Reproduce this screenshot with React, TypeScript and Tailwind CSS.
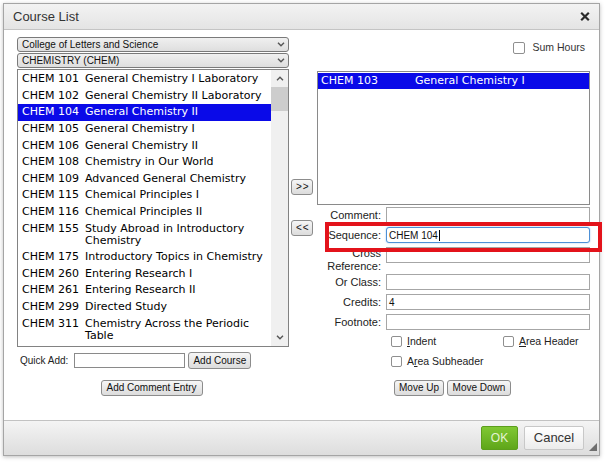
import React from 'react';

const LEFT_COURSES: [string, string][] = [
  ['CHEM 101', 'General Chemistry I Laboratory'],
  ['CHEM 102', 'General Chemistry II Laboratory'],
  ['CHEM 104', 'General Chemistry II'],
  ['CHEM 105', 'General Chemistry I'],
  ['CHEM 106', 'General Chemistry II'],
  ['CHEM 108', 'Chemistry in Our World'],
  ['CHEM 109', 'Advanced General Chemistry'],
  ['CHEM 115', 'Chemical Principles I'],
  ['CHEM 116', 'Chemical Principles II'],
  ['CHEM 155', 'Study Abroad in Introductory Chemistry'],
  ['CHEM 175', 'Introductory Topics in Chemistry'],
  ['CHEM 260', 'Entering Research I'],
  ['CHEM 261', 'Entering Research II'],
  ['CHEM 299', 'Directed Study'],
  ['CHEM 311', 'Chemistry Across the Periodic Table'],
];

const SELECTED_INDEX = 2;

const SANS = "font-['Liberation_Sans',Arial,sans-serif]";
const VERDANA = "font-['DejaVu_Sans',Verdana,sans-serif]";

function Chevron({ up = false, className = '' }: { up?: boolean; className?: string }) {
  return (
    <svg width="8" height="5" viewBox="0 0 8 5" className={className}>
      <path d={up ? 'M1 4.2 L4 1.2 L7 4.2' : 'M1 0.8 L4 3.8 L7 0.8'} fill="none" stroke="#555" strokeWidth="1.4" />
    </svg>
  );
}

function FakeSelect({ value }: { value: string }) {
  return (
    <div className={`h-[15px] flex items-center justify-between rounded-[3px] border border-[#7a7a7a] bg-gradient-to-b from-[#f0f0f0] to-[#dedede] pl-[4px] pr-[3px] text-[10px] text-[#111] ${SANS}`}>
      <span>{value}</span>
      <Chevron />
    </div>
  );
}

function SmallButton({ label, className = '' }: { label: string; className?: string }) {
  return (
    <button className={`h-[16px] px-[4px] rounded-[3px] border border-[#8c8c8c] bg-gradient-to-b from-[#f6f6f6] to-[#dcdcdc] text-[10px] leading-none text-[#111] ${SANS} ${className}`}>
      {label}
    </button>
  );
}

function CheckBox({ size = 11 }: { size?: number }) {
  return (
    <span
      className="inline-block shrink-0 rounded-[2px] border border-[#8f8f8f] bg-white"
      style={{ width: size, height: size }}
    />
  );
}

function FormRow({ label, value, focused, tall }: { label: React.ReactNode; value?: string; focused?: boolean; tall?: boolean }) {
  return (
    <div className={`flex ${tall ? 'h-[23px] items-start' : 'h-[16px] items-center'}`}>
      <div className={`w-[65px] pr-[1px] text-right text-[11px] text-[#222] ${SANS} ${tall ? 'leading-[13px]' : 'leading-none'}`}>
        {label}
      </div>
      <div
        className={`ml-[4px] w-[204px] h-[16px] flex items-center px-[2px] text-[10px] text-[#111] ${SANS} ${
          focused
            ? 'rounded-[3px] border border-[#4d90d6] shadow-[0_0_2px_#9cc4ee]'
            : 'border border-[#a6a6a6]'
        } bg-white`}
      >
        {value}
        {focused && <span className="ml-[1px] h-[11px] border-l border-black" />}
      </div>
    </div>
  );
}

export default function App() {
  return (
    <div className="relative w-[605px] h-[463px] overflow-hidden bg-white pl-[3px] pt-[3px]">
      <div className="w-[597px] h-[453px] flex flex-col border border-[#a5a5a5] bg-white shadow-[0_1px_4px_rgba(0,0,0,0.25)]">
        {/* Header */}
        <div className="h-[26px] shrink-0 flex items-center justify-between border-b border-[#c4c4c4] bg-gradient-to-b from-[#f3f3f3] to-[#e4e4e4] pl-[9px] pr-[9px]">
          <span className={`text-[13px] text-[#333] ${SANS}`}>Course List</span>
          <svg width="10" height="9" viewBox="0 0 10 9">
            <path d="M1.2 0.8 L8.8 8.2 M8.8 0.8 L1.2 8.2" stroke="#2a2a2a" strokeWidth="2.2" />
          </svg>
        </div>

        {/* Body */}
        <div className="h-[390px] shrink-0 flex pl-[13px]">
          {/* Left column */}
          <div className="w-[272px] flex flex-col pt-[7px]">
            <FakeSelect value="College of Letters and Science" />
            <div className="mt-[1px]">
              <FakeSelect value="CHEMISTRY (CHEM)" />
            </div>
            <div className="mt-[1px] h-[278px] flex border border-[#828282] bg-white">
              <div className={`flex-1 pt-[1px] text-[11px] text-black ${VERDANA}`}>
                {LEFT_COURSES.map(([code, title], i) => (
                  <div
                    key={code}
                    className={`flex py-[2.3px] pl-[4px] leading-[12px] ${i === SELECTED_INDEX ? 'bg-[#0a0ae8] text-white' : ''}`}
                  >
                    <span className="w-[63px] shrink-0 whitespace-nowrap">{code}</span>
                    <span className="w-[182px]">{title}</span>
                  </div>
                ))}
              </div>
              <div className="w-[17px] shrink-0 flex flex-col bg-[#f0f0f0]">
                <div className="h-[17px] flex items-center justify-center">
                  <Chevron up />
                </div>
                <div className="h-[24px] bg-[#cdcdcd]" />
                <div className="flex-1" />
                <div className="h-[17px] flex items-center justify-center">
                  <Chevron />
                </div>
              </div>
            </div>

            <div className="mt-[5px] h-[17px] flex items-center">
              <span className={`ml-[3px] text-[10px] text-[#222] ${SANS}`}>Quick Add:</span>
              <div className="ml-[6px] w-[111px] h-[15px] border border-[#8a8a8a] bg-white" />
              <SmallButton label="Add Course" className="ml-[3px] h-[17px] w-[63px]" />
            </div>

            <div className="mt-[11px] flex justify-center pr-[3px]">
              <SmallButton label="Add Comment Entry" className="w-[102px]" />
            </div>
          </div>

          {/* Middle column */}
          <div className="ml-[2px] w-[22px] flex flex-col pt-[149px] gap-[25px]">
            <SmallButton label=">>" className="h-[15px] w-[22px] px-0 tracking-[1px]" />
            <SmallButton label="<<" className="h-[15px] w-[22px] px-0 tracking-[1px]" />
          </div>

          {/* Right column */}
          <div className="ml-[4px] w-[273px] flex flex-col pt-[10px]">
            <div className="h-[15px] flex items-center justify-end pr-[5px]">
              <CheckBox size={12} />
              <span className={`ml-[7px] text-[10.5px] text-[#333] ${SANS}`}>Sum Hours</span>
            </div>

            <div className="mt-[16px] h-[134px] border border-[#8a8a8a] bg-white">
              <div className={`mt-[1px] flex h-[16px] items-center bg-[#0a0ae8] pl-[3px] text-[11px] text-white ${VERDANA}`}>
                <span className="w-[94px]">CHEM 103</span>
                <span>General Chemistry I</span>
              </div>
            </div>

            <div className="mt-[2px] flex flex-col gap-[4px]">
              <FormRow label="Comment:" />
              <FormRow label="Sequence:" value="CHEM 104" focused />
              <FormRow
                tall
                label={
                  <>
                    Cross
                    <br />
                    Reference:
                  </>
                }
              />
              <FormRow label="Or Class:" />
              <FormRow label="Credits:" value="4" />
              <FormRow label="Footnote:" />
            </div>

            <div className={`mt-[5px] h-[13px] flex items-center pl-[74px] text-[10.5px] text-[#222] ${SANS}`}>
              <div className="w-[112px] flex items-center">
                <CheckBox />
                <span className="ml-[5px]">
                  <span className="underline">I</span>ndent
                </span>
              </div>
              <CheckBox />
              <span className="ml-[5px]">
                <span className="underline">A</span>rea Header
              </span>
            </div>
            <div className={`mt-[7px] h-[13px] flex items-center pl-[74px] text-[10.5px] text-[#222] ${SANS}`}>
              <CheckBox />
              <span className="ml-[5px]">
                A<span className="underline">r</span>ea Subheader
              </span>
            </div>

            <div className="mt-[12px] flex justify-center gap-[3px] pr-[2px]">
              <SmallButton label="Move Up" className="w-[50px]" />
              <SmallButton label="Move Down" className="w-[64px]" />
            </div>
          </div>
        </div>

        {/* Footer */}
        <div className="relative h-[35px] shrink-0 flex items-center justify-end gap-[6px] border-t border-[#c2c2c2] bg-gradient-to-b from-[#f4f4f4] to-[#dddddd] pr-[15px]">
          <button className={`h-[24px] w-[37px] rounded-[2px] border border-[#5c9e1c] bg-gradient-to-b from-[#80c833] to-[#5fa619] text-[12px] text-[#e4f3d2] ${SANS}`}>
            OK
          </button>
          <button className={`h-[24px] w-[60px] rounded-[2px] border border-[#c8c8c8] bg-gradient-to-b from-[#ffffff] to-[#ececec] text-[13px] text-[#333] ${SANS}`}>
            Cancel
          </button>
          <svg width="8" height="8" viewBox="0 0 8 8" className="absolute right-[2px] bottom-[4px]">
            <path d="M8 0 L8 8 L0 8 Z" fill="#6f6f6f" />
          </svg>
        </div>
      </div>

      {/* Red annotation box over the Sequence row */}
      <div className="absolute left-[325px] top-[222px] w-[277px] h-[30px] border-[4px] border-[#e3131b]" />
    </div>
  );
}
